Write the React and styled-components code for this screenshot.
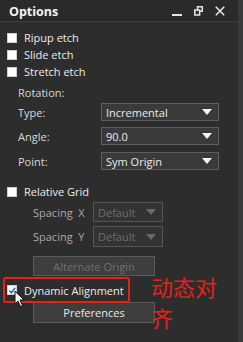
import styled, { createGlobalStyle } from 'styled-components';

const Global = createGlobalStyle`
  html, body { margin: 0; padding: 0; background: #2d2d2d; }
  body { font-family: "Open Sans", "Noto Sans", sans-serif; }
`;

const Frame = styled.div`
  display: flex;
  width: 243px;
  height: 342px;
  overflow: hidden;
  background: #2d2d2d;
`;

const Panel = styled.div`
  position: relative;
  flex: 1;
  display: flex;
  flex-direction: column;
`;

const Edge = styled.div`
  width: 5px;
  background: #3b3b3b;
`;

const TitleBar = styled.div`
  display: flex;
  align-items: center;
  height: 21px;
  padding: 0 0 0 9px;
  border-bottom: 1px solid #3e3e3e;
  background: #2a2a2a;
`;

const Title = styled.div`
  flex: 1;
  color: #f4f4f4;
  font-size: 12.5px;
  font-weight: 700;
  margin-top: 2px;
`;

const Icons = styled.div`
  display: flex;
  align-items: center;
  gap: 12px;
  padding-right: 13px;
  color: #e6e6e6;
`;

const Body = styled.div`
  display: flex;
  flex-direction: column;
  padding: 7px 0 0 7px;
`;

const Check = styled.label`
  display: flex;
  align-items: center;
  gap: 7px;
  height: 17px;
  color: #ececec;
  font-size: 11px;
`;

const Box = styled.span`
  width: 10px;
  height: 10px;
  background: #fff;
  border: 1px solid #cfcfcf;
  box-sizing: border-box;
  display: flex;
  align-items: center;
  justify-content: center;
`;

const Heading = styled.div`
  color: #d8d8d8;
  font-size: 11px;
  padding: 6px 0 0 11px;
  height: 14px;
  line-height: 14px;
`;

const FieldRow = styled.div`
  display: flex;
  align-items: center;
  margin-top: ${p => p.$top || 0}px;
  padding-left: ${p => p.$indent || 11}px;
`;

const Label = styled.div`
  width: ${p => p.$w}px;
  color: ${p => (p.$dim ? '#a8a8a8' : '#d8d8d8')};
  font-size: 11px;
  white-space: nowrap;
`;

const Select = styled.div`
  display: flex;
  align-items: center;
  width: ${p => p.$w}px;
  height: ${p => p.$h || 18}px;
  box-sizing: border-box;
  padding: 0 6px 0 4px;
  background: ${p => (p.$off ? '#333' : '#3a3a3a')};
  border: 1px solid ${p => (p.$off ? '#555' : '#5e5e5e')};
  color: ${p => (p.$off ? '#6e6e6e' : '#ececec')};
  font-size: 11px;
  span { flex: 1; }
`;

const Arrow = styled.i`
  width: 0;
  height: 0;
  border-left: 5px solid transparent;
  border-right: 5px solid transparent;
  border-top: 6px solid ${p => (p.$off ? '#6a6a6a' : '#f4f4f4')};
`;

const Spacer = styled.div`
  height: ${p => p.$h}px;
`;

const Button = styled.div`
  width: 122px;
  height: ${p => p.$h || 20}px;
  box-sizing: border-box;
  margin-left: 26px;
  margin-top: ${p => p.$top || 0}px;
  display: flex;
  align-items: center;
  justify-content: center;
  background: #3e3e3e;
  border: 1px solid #5a5a5a;
  color: ${p => (p.$off ? '#707070' : '#e8e8e8')};
  font-size: 11px;
`;

const Highlight = styled.div`
  position: relative;
  z-index: 1;
  display: flex;
  align-items: center;
  width: 127px;
  height: 26px;
  box-sizing: border-box;
  margin: 1px 0 0 -4px;
  padding-left: 2px;
  border: 2px solid #e8201a;
  border-radius: 3px;
`;

const Note = styled.div`
  position: absolute;
  left: 151px;
  top: 271px;
  width: 72px;
  color: #e8201a;
  font-family: "Noto Sans CJK SC", sans-serif;
  font-size: 22px;
  line-height: 31px;
`;

const Cursor = styled.svg`
  position: absolute;
  z-index: 2;
  left: 14px;
  top: 290px;
`;

const Options = [
  ['Type:', 'Incremental', 3],
  ['Angle:', '90.0', 6],
  ['Point:', 'Sym Origin', 7],
];

export default function App() {
  return (
    <Frame>
      <Global />
      <Panel>
        <TitleBar>
          <Title>Options</Title>
          <Icons>
            <svg width="10" height="10" viewBox="0 0 10 10"><rect x="0" y="8" width="10" height="2" fill="currentColor" /></svg>
            <svg width="9" height="10" viewBox="0 0 9 10" fill="none" stroke="currentColor" strokeWidth="1.5">
              <rect x="3.5" y="0.8" width="4.8" height="4.5" />
              <rect x="0.8" y="4" width="4.8" height="5" fill="#2a2a2a" />
            </svg>
            <svg width="10" height="10" viewBox="0 0 10 10" stroke="currentColor" strokeWidth="1.6"><path d="M0.8 0.8 L9.2 9.2 M9.2 0.8 L0.8 9.2" /></svg>
          </Icons>
        </TitleBar>
        <Body>
          <Check><Box />Ripup etch</Check>
          <Check><Box />Slide etch</Check>
          <Check><Box />Stretch etch</Check>
          <Heading>Rotation:</Heading>
          {Options.map(([l, v, t]) => (
            <FieldRow key={l} $top={t}>
              <Label $w={83}>{l}</Label>
              <Select $w={118}><span>{v}</span><Arrow /></Select>
            </FieldRow>
          ))}
          <Spacer $h={13} />
          <Check><Box />Relative Grid</Check>
          <FieldRow $indent={26} $top={2}>
            <Label $w={60} $dim>Spacing&nbsp; X</Label>
            <Select $w={70} $h={20} $off><span>Default</span><Arrow $off /></Select>
          </FieldRow>
          <FieldRow $indent={26} $top={4}>
            <Label $w={60} $dim>Spacing&nbsp; Y</Label>
            <Select $w={70} $h={21} $off><span>Default</span><Arrow $off /></Select>
          </FieldRow>
          <Button $off $top={9}>Alternate Origin</Button>
          <Highlight>
            <Check>
              <Box>
                <svg width="9" height="9" viewBox="0 0 9 9"><path d="M1.5 4.5 L3.8 7 L8 1.5" stroke="#2a6fc0" strokeWidth="1.8" fill="none" /></svg>
              </Box>
              Dynamic Alignment
            </Check>
          </Highlight>
          <Button $top={-1} $h={21}>Preferences</Button>
        </Body>
        <Note>动态对齐</Note>
        <Cursor width="12" height="18" viewBox="0 0 12 18">
          <path d="M1 1 L1 14 L4 11 L6.5 16.5 L8.5 15.5 L6 10 L10 10 Z" fill="#fff" stroke="#111" strokeWidth="1" />
        </Cursor>
      </Panel>
      <Edge />
    </Frame>
  );
}
